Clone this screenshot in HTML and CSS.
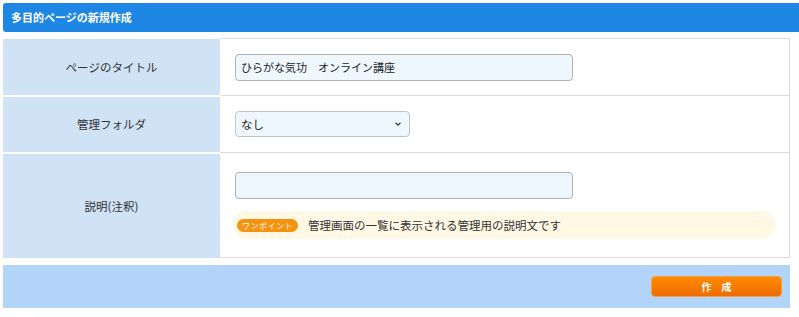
FILE: index.html
```html
<!DOCTYPE html>
<html lang="ja">
<head>
    <meta charset="UTF-8">
    <meta name="viewport" content="width=device-width, initial-scale=1.0">
    <title>多目的ページの新規作成</title>
    <link rel="stylesheet" href="styles.css">
</head>
<body>
    <div class="page-head">多目的ページの新規作成</div>

    <table class="form-table">
        <tr class="row-title">
            <th>ページのタイトル</th>
            <td><input type="text" class="text-input" value="ひらがな気功　オンライン講座"></td>
        </tr>
        <tr class="row-folder">
            <th>管理フォルダ</th>
            <td>
                <div class="select-box">
                    <span>なし</span>
                    <svg width="8" height="6" viewBox="0 0 8 6"><path d="M1.5 1.8 L4 4.2 L6.5 1.8" fill="none" stroke="#333" stroke-width="1.2"/></svg>
                </div>
            </td>
        </tr>
        <tr class="row-note">
            <th>説明(注釈)</th>
            <td>
                <input type="text" class="text-input">
                <div class="hint">
                    <span class="badge">ワンポイント</span>
                    <span>管理画面の一覧に表示される管理用の説明文です</span>
                </div>
            </td>
        </tr>
    </table>

    <div class="actions">
        <button class="submit">作　成</button>
    </div>
</body>
</html>
```

FILE: styles.css
```css
body {
    margin: 0;
    padding: 3px 0 0 3px;
    font-family: "Noto Sans CJK JP", "Noto Sans", sans-serif;
    font-size: 12px;
    color: #333;
    background: #fff;
}

.page-head {
    height: 29px;
    line-height: 29px;
    padding-left: 8px;
    background: #1e87e5;
    color: #fff;
    font-size: 11px;
    font-weight: bold;
    border-radius: 3px 0 0 3px;
}

.form-table {
    width: 787px;
    margin-top: 6px;
    border-collapse: collapse;
    border-right: 1px solid #dcdcdc;
}

.form-table th {
    width: 217px;
    background: #d0e2f5;
    font-weight: normal;
    font-size: 11.5px;
    text-align: center;
    border-bottom: 2px solid #fff;
    padding: 0;
}

.form-table td {
    padding: 0 0 0 15px;
    border-top: 1px solid #dcdcdc;
    border-bottom: 1px solid #dcdcdc;
}

.form-table tr:last-child th {
    border-bottom: none;
}

.row-title th, .row-title td { height: 56px; }
.row-folder th, .row-folder td { height: 55px; }
.row-note th, .row-note td { height: 104px; }

.text-input {
    display: block;
    box-sizing: border-box;
    width: 338px;
    height: 27px;
    margin: 0;
    padding: 0 5px;
    background: #eef7fe;
    border: 1px solid #b0b0b0;
    border-radius: 4px;
    font-family: inherit;
    font-size: 11px;
    color: #222;
}

.select-box {
    box-sizing: border-box;
    width: 175px;
    height: 26px;
    padding: 0 7px 0 5px;
    display: flex;
    align-items: center;
    justify-content: space-between;
    background: #eef7fe;
    border: 1px solid #c4c4c4;
    border-radius: 4px;
    font-size: 11.5px;
    color: #222;
}

.row-note .text-input {
    margin-top: 1px;
}

.hint {
    width: 543px;
    height: 28px;
    margin: 12px 0 0 -2px;
    padding-left: 4px;
    box-sizing: border-box;
    display: flex;
    align-items: center;
    gap: 10px;
    background: #fff8e4;
    border-radius: 14px;
    font-size: 11.5px;
    color: #333;
}

.badge {
    padding: 0 5px;
    height: 13px;
    line-height: 13px;
    background: #f7920f;
    color: #fff;
    font-size: 8px;
    border-radius: 7px;
    letter-spacing: 0.5px;
}

.actions {
    width: 787px;
    height: 43px;
    margin-top: 7px;
    background: #b3d4f9;
    display: flex;
    align-items: center;
    justify-content: flex-end;
}

.submit {
    width: 131px;
    height: 21px;
    margin-right: 8px;
    padding: 0;
    border: 1px solid #f5a040;
    border-radius: 4px;
    background: linear-gradient(to bottom, #ff8a00, #ef6c00);
    color: #fff;
    font-family: inherit;
    font-size: 10px;
    font-weight: bold;
    cursor: pointer;
}
```
